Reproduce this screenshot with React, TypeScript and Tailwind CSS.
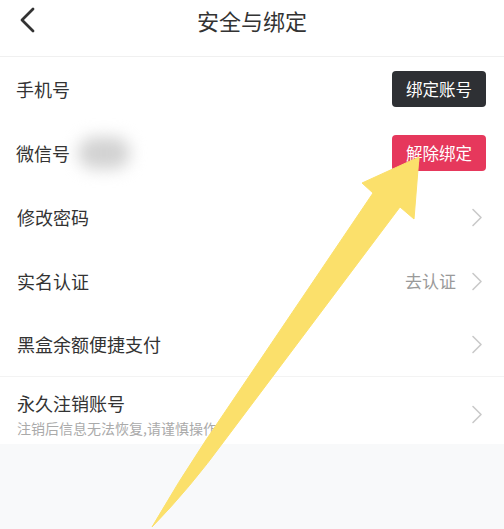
import React from "react";

const font = { fontFamily: '"Noto Sans CJK SC", "Noto Sans", sans-serif' };

function Chevron() {
  return (
    <svg width="12" height="19" viewBox="0 0 12 19" className="shrink-0">
      <path d="M2 1.5 L10 9.5 L2 17.5" fill="none" stroke="#c9c9c9" strokeWidth="1.6" strokeLinecap="round" strokeLinejoin="round" />
    </svg>
  );
}

export default function App() {
  return (
    <div className="relative w-[504px] h-[529px] overflow-hidden bg-[#f8f9fa] text-[#333]" style={font}>
      <div className="h-[57px] bg-white border-b border-[#f0f0f0] relative flex items-center justify-center">
        <svg width="20" height="28" viewBox="0 0 20 28" className="absolute left-[18px] top-[6px]">
          <path d="M15 3 L4 14 L15 25" fill="none" stroke="#333" strokeWidth="2.8" strokeLinecap="round" strokeLinejoin="round" />
        </svg>
        <div className="text-[22px] leading-[30px] -mt-[17px] text-[#333]">安全与绑定</div>
      </div>
      <div className="bg-white">
        <div className="h-[64px] flex items-center justify-between pl-[16px] pr-[18px]">
          <div className="text-[18px]">手机号</div>
          <div className="w-[94px] h-[36px] rounded-[4px] bg-[#2e3034] text-white text-[16.5px] flex items-center justify-center">绑定账号</div>
        </div>
        <div className="h-[64px] flex items-center justify-between pl-[16px] pr-[18px]">
          <div className="flex items-center">
            <div className="text-[18px]">微信号</div>
            <div className="ml-[8px] w-[52px] h-[32px] rounded-full bg-[#d2d2d2] blur-[8px]" />
          </div>
          <div className="w-[94px] h-[36px] rounded-[4px] bg-[#e6385c] text-white text-[16.5px] flex items-center justify-center">解除绑定</div>
        </div>
        <div className="h-[64px] flex items-center justify-between pl-[17px] pr-[21px]">
          <div className="text-[18px]">修改密码</div>
          <Chevron />
        </div>
        <div className="h-[64px] flex items-center justify-between pl-[17px] pr-[21px]">
          <div className="text-[18px]">实名认证</div>
          <div className="flex items-center gap-[15px]">
            <div className="text-[17px] text-[#9a9a9a]">去认证</div>
            <Chevron />
          </div>
        </div>
        <div className="h-[64px] flex items-center justify-between pl-[17px] pr-[21px] border-b border-[#f3f3f3]">
          <div className="text-[18px]">黑盒余额便捷支付</div>
          <Chevron />
        </div>
        <div className="flex items-center justify-between pl-[17px] pr-[21px] pt-[14px] pb-[6px]">
          <div className="flex flex-col">
            <div className="text-[18px] leading-[24px]">永久注销账号</div>
            <div className="mt-[3px] text-[14px] leading-[20px] text-[#aaaaaa]">注销后信息无法恢复,请谨慎操作</div>
          </div>
          <Chevron />
        </div>
      </div>
      <svg className="absolute left-0 top-0 pointer-events-none" width="504" height="529" viewBox="0 0 504 529">
        <path
          d="M419 157 L414 219 L400 207 L225 440 Q190 488 152 527 Q178 482 206 440 L373 193 L362 183 Z"
          fill="#fbe06b"
          stroke="#fbe06b"
          strokeWidth="1"
          strokeLinejoin="round"
        />
      </svg>
    </div>
  );
}
